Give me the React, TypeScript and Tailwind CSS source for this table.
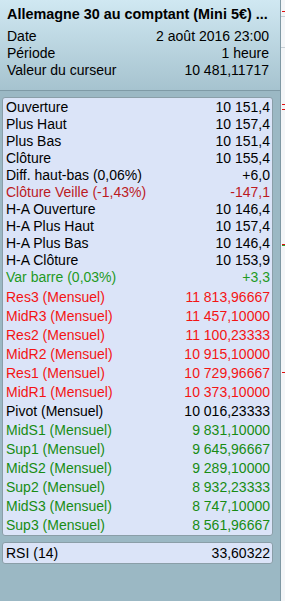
import React from "react";

type Row = { l: string; v: string; c?: string };

const first: Row[] = [
  { l: "Ouverture", v: "10 151,4" },
  { l: "Plus Haut", v: "10 157,4" },
  { l: "Plus Bas", v: "10 151,4" },
  { l: "Clôture", v: "10 155,4" },
  { l: "Diff. haut-bas (0,06%)", v: "+6,0" },
  { l: "Clôture Veille (-1,43%)", v: "-147,1", c: "text-[#bb1a1f]" },
  { l: "H-A Ouverture", v: "10 146,4" },
  { l: "H-A Plus Haut", v: "10 157,4" },
  { l: "H-A Plus Bas", v: "10 146,4" },
  { l: "H-A Clôture", v: "10 153,9" },
  { l: "Var barre (0,03%)", v: "+3,3", c: "text-[#1f9a1f]" },
];

const R = "text-[#f41414]";
const G = "text-[#188c14]";

const pivots: Row[] = [
  { l: "Res3 (Mensuel)", v: "11 813,96667", c: R },
  { l: "MidR3 (Mensuel)", v: "11 457,10000", c: R },
  { l: "Res2 (Mensuel)", v: "11 100,23333", c: R },
  { l: "MidR2 (Mensuel)", v: "10 915,10000", c: R },
  { l: "Res1 (Mensuel)", v: "10 729,96667", c: R },
  { l: "MidR1 (Mensuel)", v: "10 373,10000", c: R },
  { l: "Pivot (Mensuel)", v: "10 016,23333" },
  { l: "MidS1 (Mensuel)", v: "9 831,10000", c: G },
  { l: "Sup1 (Mensuel)", v: "9 645,96667", c: G },
  { l: "MidS2 (Mensuel)", v: "9 289,10000", c: G },
  { l: "Sup2 (Mensuel)", v: "8 932,23333", c: G },
  { l: "MidS3 (Mensuel)", v: "8 747,10000", c: G },
  { l: "Sup3 (Mensuel)", v: "8 561,96667", c: G },
];

function Line({ r, h }: { r: Row; h: string }) {
  return (
    <div className={`flex justify-between whitespace-nowrap ${h} ${r.c ?? "text-black"}`}>
      <span>{r.l}</span>
      <span>{r.v}</span>
    </div>
  );
}

export default function App() {
  return (
    <div className="flex w-[285px] h-[601px] overflow-hidden font-['Liberation_Sans',Arial,sans-serif] text-[14px]">
      <div className="w-[281px] shrink-0 flex flex-col bg-[#9bb8c4] border-r border-[#7e98a3]">
        <div className="h-[91px] shrink-0 border-b border-[#7f9aa6] bg-gradient-to-b from-[#d0e8f2] to-[#a6c3cf] px-[7px] pt-[5px] text-black">
          <div className="h-[18px] leading-[18px] font-bold text-[14.4px] whitespace-nowrap">
            Allemagne 30 au comptant (Mini 5€) ...
          </div>
          <div className="mt-[5px] pr-[4px]">
            <div className="flex justify-between leading-[17px]">
              <span>Date</span>
              <span>2 août 2016 23:00</span>
            </div>
            <div className="flex justify-between leading-[17px]">
              <span>Période</span>
              <span>1 heure</span>
            </div>
            <div className="flex justify-between leading-[17px]">
              <span>Valeur du curseur</span>
              <span>10 481,11717</span>
            </div>
          </div>
        </div>
        <div className="pl-[2px] pr-[7px] pt-[6px]">
          <div className="rounded-[3px] border border-[#8a9ea8] bg-[#dbe4f8] pl-[3px] pr-[2px] pt-[1px]">
            {first.map((r) => (
              <Line key={r.l} r={r} h="leading-[17px]" />
            ))}
            <div className="mt-[2px]">
              {pivots.map((r) => (
                <Line key={r.l} r={r} h="leading-[19px]" />
              ))}
            </div>
          </div>
          <div className="mt-[6px] rounded-[3px] border border-[#8a9ea8] bg-[#dbe4f8] pl-[3px] pr-[2px]">
            <Line r={{ l: "RSI (14)", v: "33,60322" }} h="leading-[20px]" />
          </div>
        </div>
      </div>
      <div className="relative flex-1 bg-[#f4f6f8]">
        <div className="absolute left-0 right-0 top-[16px] h-px bg-[#c9d0d5]" />
        <div className="absolute left-0 right-0 top-[47px] h-px bg-[#c9d0d5]" />
        <div className="absolute left-[1px] w-[3px] top-[11px] h-px bg-[#e01010]" />
        <div className="absolute left-[1px] w-[3px] top-[104px] h-px bg-[#e01010]" />
        <div className="absolute left-[1px] w-[3px] top-[109px] h-px bg-[#e01010]" />
        <div className="absolute left-[1px] w-[3px] top-[244px] h-px bg-[#e01010]" />
        <div className="absolute left-[1px] w-[3px] top-[245px] h-px bg-[#29a329]" />
        <div className="absolute left-[1px] w-[3px] top-[372px] h-px bg-[#e01010]" />
      </div>
    </div>
  );
}
